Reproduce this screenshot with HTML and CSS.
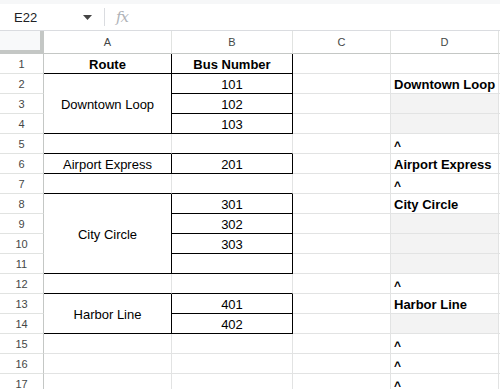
FILE: index.html
```html
<!DOCTYPE html>
<html>
<head>
<meta charset="utf-8">
<link rel="stylesheet" href="styles.css">
</head>
<body>
<div class="topstrip"></div>
<div class="formula-bar">
  <div class="namebox">E22</div>
  <svg class="caret" width="9" height="5" viewBox="0 0 9 5"><path d="M0 0 L9 0 L4.5 5 Z" fill="#444"/></svg>
  <div class="sep"></div>
  <div class="fx">fx</div>
</div>
<div class="sheet">
  <div class="corner"></div>
  <div class="colh">A</div>
  <div class="colh">B</div>
  <div class="colh">C</div>
  <div class="colh">D</div>
  <div class="colh e"></div>

  <!-- row 1 -->
  <div class="rowh">1</div>
  <div class="c ctr bold bb br">Route</div>
  <div class="c ctr bold bb br">Bus Number</div>
  <div class="c"></div>
  <div class="c"></div>
  <div class="c e"></div>

  <!-- row 2 -->
  <div class="rowh">2</div>
  <div class="c ctr bb br span3">Downtown Loop</div>
  <div class="c ctr bb br">101</div>
  <div class="c"></div>
  <div class="c bold">Downtown Loop</div>
  <div class="c e"></div>

  <!-- row 3 -->
  <div class="rowh">3</div>
  <div class="c ctr bb br">102</div>
  <div class="c"></div>
  <div class="c shade"></div>
  <div class="c e"></div>

  <!-- row 4 -->
  <div class="rowh">4</div>
  <div class="c ctr bb br">103</div>
  <div class="c"></div>
  <div class="c shade"></div>
  <div class="c e"></div>

  <!-- row 5 -->
  <div class="rowh">5</div>
  <div class="c bb"></div>
  <div class="c bb"></div>
  <div class="c"></div>
  <div class="c bold caretc">^</div>
  <div class="c e"></div>

  <!-- row 6 -->
  <div class="rowh">6</div>
  <div class="c ctr bb br">Airport Express</div>
  <div class="c ctr bb br">201</div>
  <div class="c"></div>
  <div class="c bold">Airport Express</div>
  <div class="c e"></div>

  <!-- row 7 -->
  <div class="rowh">7</div>
  <div class="c bb"></div>
  <div class="c bb"></div>
  <div class="c"></div>
  <div class="c bold caretc">^</div>
  <div class="c e"></div>

  <!-- row 8 -->
  <div class="rowh">8</div>
  <div class="c ctr bb br span4">City Circle</div>
  <div class="c ctr bb br">301</div>
  <div class="c"></div>
  <div class="c bold">City Circle</div>
  <div class="c e"></div>

  <!-- row 9 -->
  <div class="rowh">9</div>
  <div class="c ctr bb br">302</div>
  <div class="c"></div>
  <div class="c shade"></div>
  <div class="c e"></div>

  <!-- row 10 -->
  <div class="rowh">10</div>
  <div class="c ctr bb br">303</div>
  <div class="c"></div>
  <div class="c shade"></div>
  <div class="c e"></div>

  <!-- row 11 -->
  <div class="rowh">11</div>
  <div class="c ctr bb br"></div>
  <div class="c"></div>
  <div class="c shade"></div>
  <div class="c e"></div>

  <!-- row 12 -->
  <div class="rowh">12</div>
  <div class="c bb"></div>
  <div class="c bb"></div>
  <div class="c"></div>
  <div class="c bold caretc">^</div>
  <div class="c e"></div>

  <!-- row 13 -->
  <div class="rowh">13</div>
  <div class="c ctr bb br span2">Harbor Line</div>
  <div class="c ctr bb br">401</div>
  <div class="c"></div>
  <div class="c bold">Harbor Line</div>
  <div class="c e"></div>

  <!-- row 14 -->
  <div class="rowh">14</div>
  <div class="c ctr bb br">402</div>
  <div class="c"></div>
  <div class="c shade"></div>
  <div class="c e"></div>

  <!-- row 15 -->
  <div class="rowh">15</div>
  <div class="c"></div>
  <div class="c"></div>
  <div class="c"></div>
  <div class="c bold caretc">^</div>
  <div class="c e"></div>

  <!-- row 16 -->
  <div class="rowh">16</div>
  <div class="c"></div>
  <div class="c"></div>
  <div class="c"></div>
  <div class="c bold caretc">^</div>
  <div class="c e"></div>

  <!-- row 17 -->
  <div class="rowh">17</div>
  <div class="c"></div>
  <div class="c"></div>
  <div class="c"></div>
  <div class="c bold caretc">^</div>
  <div class="c e"></div>
</div>
</body>
</html>
```
FILE: styles.css
```css
* { box-sizing: border-box; }
html, body {
  margin: 0;
  padding: 0;
  background: #fff;
  overflow: hidden;
  font-family: "Liberation Sans", Arial, sans-serif;
  color: #000;
}
.topstrip {
  height: 4px;
  background: #f6f7f8;
}
.formula-bar {
  height: 27px;
  display: flex;
  align-items: center;
  background: #fff;
  border-bottom: 1px solid #dadce0;
}
.namebox {
  font-size: 13px;
  color: #202124;
  width: 70px;
  padding-left: 14px;
}
.caret {
  margin-left: 13px;
}
.sep {
  width: 1px;
  height: 18px;
  background: #dadce0;
  margin-left: 12px;
}
.fx {
  margin-left: 11px;
  font-family: "DejaVu Serif", "Liberation Serif", serif;
  font-style: italic;
  font-size: 15px;
  color: #b0b3b8;
  letter-spacing: -1px;
}
.sheet {
  width: 500px;
  overflow: hidden;
  display: grid;
  grid-template-columns: 44px 128px 121px 98px 108px 1fr;
  grid-template-rows: 23px repeat(17, 20px);
}
.corner {
  background: #f8f9fa;
  border-right: 4px solid #c4c7c5;
  border-bottom: 4px solid #c4c7c5;
}
.colh {
  display: flex;
  align-items: center;
  justify-content: center;
  font-size: 11px;
  color: #444746;
  border-right: 1px solid #e1e3e1;
  border-bottom: 1px solid #c4c7c5;
  background: #fff;
}
.rowh {
  display: flex;
  align-items: center;
  justify-content: center;
  font-size: 11px;
  color: #444746;
  padding-top: 1px;
  border-right: 1px solid #c4c7c5;
  border-bottom: 1px solid #e1e3e1;
  background: #fff;
}
.c {
  display: flex;
  align-items: center;
  padding: 2px 3px 0;
  font-size: 13px;
  white-space: nowrap;
  overflow: hidden;
  border-right: 1px solid #e2e3e3;
  border-bottom: 1px solid #e2e3e3;
  background: #fff;
}
.c.ctr { justify-content: center; }
.bold { font-weight: bold; }
.c.bb { border-bottom-color: #000; }
.c.br { border-right-color: #000; }
.shade { background: #f3f3f3; }
.caretc { font-size: 12px; align-items: flex-start; padding-top: 5px; }
.span2 { grid-row: span 2; }
.span3 { grid-row: span 3; }
.span4 { grid-row: span 4; }
```
